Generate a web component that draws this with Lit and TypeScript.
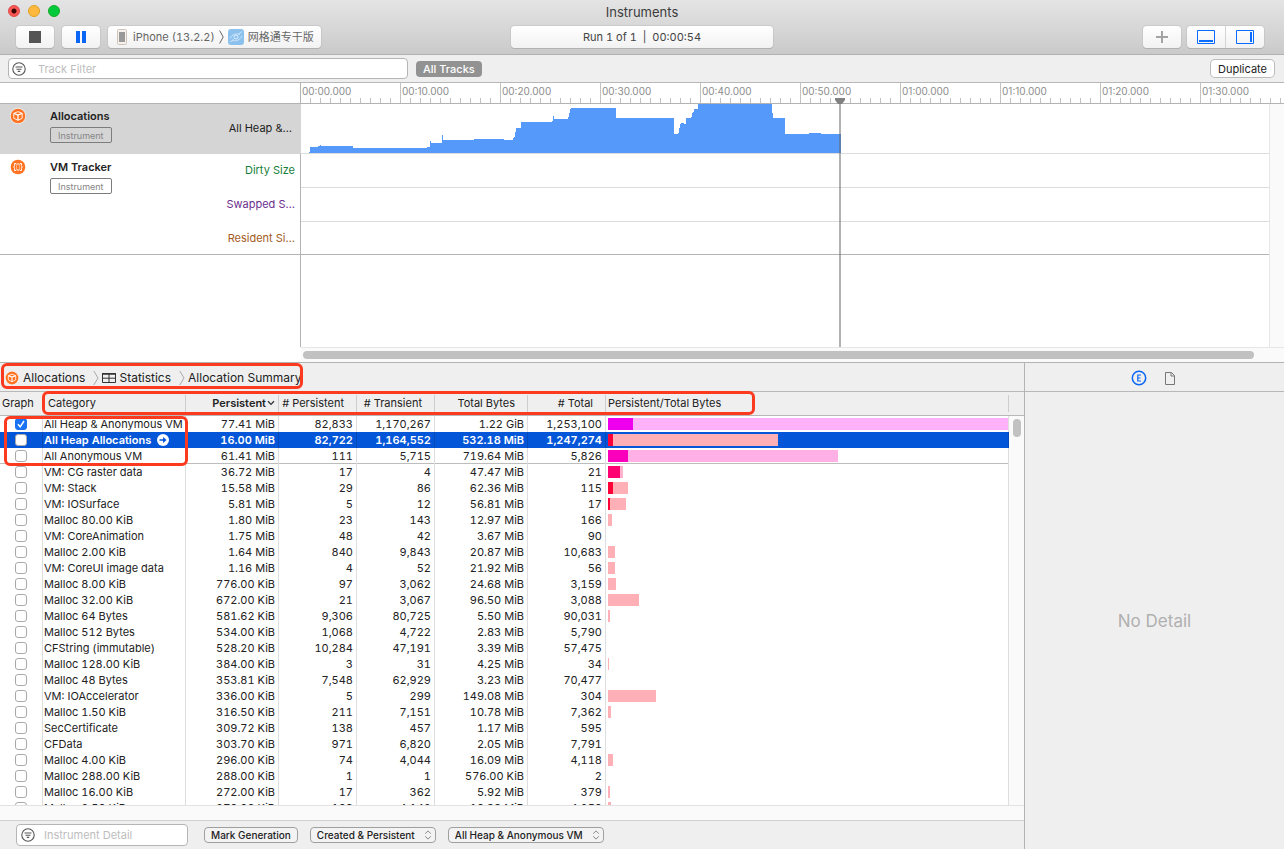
import { LitElement, html, css, svg, nothing } from "lit";
import { customElement, state } from "lit/decorators.js";
import { classMap } from "lit/directives/class-map.js";

interface Allocation {
  category: string;
  persistent: string;
  live: string;
  transient: string;
  totalBytes: string;
  total: string;
  tone?: string;
}

const row = (
  category: string,
  persistent: string,
  live: string,
  transient: string,
  totalBytes: string,
  total: string,
  tone = "",
): Allocation => ({ category, persistent, live, transient, totalBytes, total, tone });

const ROWS: Allocation[] = [
  row("All Heap & Anonymous VM", "77.41 MiB", "82,833", "1,170,267", "1.22 GiB", "1,253,100", "magenta"),
  row("All Heap Allocations", "16.00 MiB", "82,722", "1,164,552", "532.18 MiB", "1,247,274"),
  row("All Anonymous VM", "61.41 MiB", "111", "5,715", "719.64 MiB", "5,826", "pink"),
  row("VM: CG raster data", "36.72 MiB", "17", "4", "47.47 MiB", "21", "rose"),
  row("VM: Stack", "15.58 MiB", "29", "86", "62.36 MiB", "115"),
  row("VM: IOSurface", "5.81 MiB", "5", "12", "56.81 MiB", "17"),
  row("Malloc 80.00 KiB", "1.80 MiB", "23", "143", "12.97 MiB", "166"),
  row("VM: CoreAnimation", "1.75 MiB", "48", "42", "3.67 MiB", "90"),
  row("Malloc 2.00 KiB", "1.64 MiB", "840", "9,843", "20.87 MiB", "10,683"),
  row("VM: CoreUI image data", "1.16 MiB", "4", "52", "21.92 MiB", "56"),
  row("Malloc 8.00 KiB", "776.00 KiB", "97", "3,062", "24.68 MiB", "3,159"),
  row("Malloc 32.00 KiB", "672.00 KiB", "21", "3,067", "96.50 MiB", "3,088"),
  row("Malloc 64 Bytes", "581.62 KiB", "9,306", "80,725", "5.50 MiB", "90,031"),
  row("Malloc 512 Bytes", "534.00 KiB", "1,068", "4,722", "2.83 MiB", "5,790"),
  row("CFString (immutable)", "528.20 KiB", "10,284", "47,191", "3.39 MiB", "57,475"),
  row("Malloc 128.00 KiB", "384.00 KiB", "3", "31", "4.25 MiB", "34"),
  row("Malloc 48 Bytes", "353.81 KiB", "7,548", "62,929", "3.23 MiB", "70,477"),
  row("VM: IOAccelerator", "336.00 KiB", "5", "299", "149.08 MiB", "304"),
  row("Malloc 1.50 KiB", "316.50 KiB", "211", "7,151", "10.78 MiB", "7,362"),
  row("SecCertificate", "309.72 KiB", "138", "457", "1.17 MiB", "595"),
  row("CFData", "303.70 KiB", "971", "6,820", "2.05 MiB", "7,791"),
  row("Malloc 4.00 KiB", "296.00 KiB", "74", "4,044", "16.09 MiB", "4,118"),
  row("Malloc 288.00 KiB", "288.00 KiB", "1", "1", "576.00 KiB", "2"),
  row("Malloc 16.00 KiB", "272.00 KiB", "17", "362", "5.92 MiB", "379"),
  row("Malloc 2.50 KiB", "270.00 KiB", "108", "4,142", "10.38 MiB", "4,250"),
];

const UNITS: Record<string, number> = { KiB: 1 / 1024, MiB: 1, GiB: 1024 };
const SMALLEST_BAR = 4;

const mebibytes = (size: string): number => {
  const [amount, unit] = size.split(" ");
  return Number(amount) * UNITS[unit];
};

const LARGEST = Math.max(...ROWS.map((r) => mebibytes(r.totalBytes)));

const barWidth = (size: string): string => {
  const value = mebibytes(size);
  return value < SMALLEST_BAR ? "0" : `${((value / LARGEST) * 100).toFixed(2)}%`;
};

/* Heap level over time: [x, top] steps on a 100px-per-10s time axis. */
const LEVELS: [number, number][] = [
  [309, 48], [310, 43], [318, 42], [320, 41], [321, 42], [353, 44], [427, 43], [430, 37],
  [431, 39], [442, 31], [443, 36], [474, 35], [504, 36], [513, 34], [514, 33], [515, 28],
  [516, 24], [521, 18], [552, 17], [553, 12], [554, 15], [568, 13], [569, 9], [570, 5],
  [571, 4], [616, 14], [674, 30], [678, 29], [679, 24], [680, 20], [681, 19], [684, 20],
  [686, 14], [691, 13], [692, 9], [693, 8], [694, 5], [698, 0], [772, 9], [773, 14],
  [785, 30], [809, 29], [821, 30],
];
/* Each pair lowers or raises the outline at its x; the last level runs to the playhead. */
const levelPath = `M309 49${LEVELS.map(([x, y]) => `H${x}V${y}`).join("")}H841V49Z`;

const TIMES = [
  "00:00.000", "00:10.000", "00:20.000", "00:30.000", "00:40.000",
  "00:50.000", "01:00.000", "01:10.000", "01:20.000", "01:30.000",
];

const filterIcon = html`<svg class="filter-icon" width="14" height="14" viewBox="0 0 14 14" aria-hidden="true">
  <circle cx="7" cy="7" r="6.2" fill="none" stroke="#555" stroke-width="1.1" />
  <path d="M3.5 5h7M4.5 7.2h5M5.8 9.4h2.4" stroke="#555" stroke-width="1.1" />
</svg>`;

const cubeIcon = (size: number) => html`<svg width=${size} height=${size} viewBox="0 0 16 16" aria-hidden="true">
  <circle cx="8" cy="8" r="8" fill="#fff" opacity=".7" />
  <circle cx="8" cy="8" r="7.3" fill="#ff7322" />
  <path d="M8 3.700 12.200 5.300V10.300L8 12.300 3.800 10.300V5.300Z" fill="none" stroke="#fff" stroke-width=".9" stroke-linejoin="round" />
  <path d="M3.800 5.300 8 7 12.200 5.300M8 7V12.300" fill="none" stroke="#fff" stroke-width="1.300" />
</svg>`;

const vmIcon = html`<svg width="16" height="16" viewBox="0 0 16 16" aria-hidden="true">
  <circle cx="8" cy="8" r="7.3" fill="#ff7322" />
  <path d="M6 4.5H4.6V6.6L3.8 8 4.6 9.4V11.5H6M10 4.5h1.4V6.6L12.2 8 11.4 9.4V11.5H10" fill="none" stroke="#fff" stroke-width="1" />
  <path d="M6.6 5h2.8M6.6 11h2.8" stroke="#fff" stroke-width="1" />
  <path d="M6.6 5v6M9.4 5v6" stroke="#ffd0b0" stroke-width=".7" />
</svg>`;

const crumbArrow = html`<svg class="crumb-arrow" width="6" height="16" viewBox="0 0 6 16" aria-hidden="true">
  <path d="M.8 1 5 8 .8 15" fill="none" stroke="#a8a8a8" stroke-width="1" />
</svg>`;

const stepper = html`<svg class="stepper" width="8" height="10" viewBox="0 0 8 10" aria-hidden="true">
  <path d="M1.2 3.7 4 .9l2.8 2.8M1.2 6.3 4 9.1l2.8-2.8" fill="none" stroke="#888" stroke-width="1" />
</svg>`;

@customElement("app-root")
export class AppRoot extends LitElement {
  @state() private selected = 1;

  static styles = css`
    :host {
      display: flex;
      flex-direction: column;
      height: 100vh;
      overflow: hidden;
      background: #fff;
      color: #222;
      font: 11px/16px Inter, "Noto Sans CJK SC", sans-serif;
    }
    * {
      box-sizing: border-box;
    }
    svg {
      display: block;
      flex: none;
    }
    button,
    input,
    select {
      margin: 0;
      padding: 0;
      font: inherit;
      color: inherit;
    }
    .titlebar {
      flex: none;
      display: flex;
      flex-direction: column;
      height: 55px;
      border-bottom: 1px solid #b1b1b1;
      background: linear-gradient(#e4e4e4, #cacaca);
    }
    .caption {
      display: grid;
      grid-template-columns: 1fr auto 1fr;
      align-items: center;
      height: 24px;
      padding: 0 8px;
    }
    .lights {
      display: flex;
      gap: 8px;
      margin-bottom: 2px;
    }
    .light {
      width: 12px;
      height: 12px;
      border: 1px solid #de4643;
      border-radius: 50%;
      background: radial-gradient(circle, #3b0503 2px, #fc5753 3px);
    }
    .light.minimize {
      border-color: #dfa023;
      background: #fdb93e;
    }
    .light.zoom {
      border-color: #12ac28;
      background: #00c93b;
    }
    h1 {
      margin: 0;
      font-size: 13px;
      font-weight: 400;
      color: #3c3c3c;
    }
    .toolbar {
      display: grid;
      grid-template-columns: 1fr minmax(0, 262px) 1fr;
      align-items: center;
      height: 25px;
      padding: 0 16px;
    }
    .tools {
      display: flex;
      align-items: center;
      gap: 8px;
    }
    .tools.end {
      justify-content: flex-end;
      gap: 6px;
      padding-right: 4px;
    }
    .tool,
    .scheme,
    .status {
      display: flex;
      align-items: center;
      justify-content: center;
      height: 22px;
      border: 0;
      border-radius: 4px;
      background: linear-gradient(#fff, #f2f2f2);
      box-shadow: 0 0 0 1px #bdbdbd88, 0 1px 0 #a5a5a5;
    }
    .tool {
      width: 38px;
    }
    .scheme {
      padding: 0 7px 0 9px;
      color: #666;
      gap: 4px;
      white-space: nowrap;
      font-variant-numeric: tabular-nums;
    }
    .scheme svg:first-child {
      margin-right: 2px;
    }
    .status {
      color: #444;
      white-space: pre;
      font-variant-numeric: tabular-nums;
    }
    .segments {
      display: flex;
      border-radius: 4px;
      box-shadow: 0 0 0 1px #bdbdbd88, 0 1px 0 #a5a5a5;
    }
    .segments .tool {
      box-shadow: none;
    }
    .segments .tool:first-child {
      border-radius: 4px 0 0 4px;
      border-right: 1px solid #d4d4d4;
      width: 39px;
    }
    .segments .tool:last-child {
      border-radius: 0 4px 4px 0;
    }
    .filterbar {
      flex: none;
      display: flex;
      align-items: center;
      gap: 8px;
      height: 28px;
      padding: 0 10px 0 8px;
      border-bottom: 1px solid #b8b8b8;
      background: #efefef;
    }
    .field {
      display: flex;
      align-items: center;
      gap: 12px;
      height: 21px;
      padding-left: 3px;
      border: 1px solid #b5b5b5;
      border-radius: 4px;
      background: #fff;
    }
    .field.track {
      width: 400px;
    }
    .field input {
      flex: 1;
      min-width: 0;
      border: 0;
      outline: 0;
      background: none;
    }
    .field input::placeholder {
      color: #bdbdbd;
      opacity: 1;
    }
    .pill {
      height: 16px;
      padding: 0 7px;
      border: 0;
      border-radius: 4px;
      background: #929292;
      color: #fff;
      font-weight: 500;
    }
    .duplicate {
      height: 17px;
      margin-left: auto;
      padding: 0 7px;
      border: 0;
      border-radius: 4px;
      background: #fff;
      box-shadow: 0 0 0 1px #bcbcbc;
    }
    .panes {
      flex: 1;
      min-height: 0;
      display: grid;
      grid-template-rows: minmax(0, 280fr) minmax(0, 486fr);
    }
    .timeline {
      position: relative;
      display: grid;
      grid-template-columns: 301px minmax(0, 1fr);
      grid-template-rows: 21px minmax(0, 1fr) 15px;
      border-bottom: 1px solid #b3b3b3;
    }
    .corner,
    .ruler {
      border-bottom: 1px solid #b3b3b3;
    }
    .corner {
      border-right: 1px solid #b3b3b3;
    }
    .ruler {
      display: flex;
      overflow: hidden;
      background: repeating-linear-gradient(90deg, transparent 0 9px, #c2c2c2 9px 10px) bottom / 100% 5px no-repeat;
      color: #8c8c8c;
      font-size: 10px;
      line-height: 17px;
    }
    .time {
      flex: none;
      width: 100px;
      padding-left: 1px;
      border-right: 1px solid #c2c2c2;
    }
    .tracks {
      grid-column: 1 / -1;
      display: grid;
      grid-template-columns: minmax(0, 1fr) 15px;
    }
    .gutter {
      border-left: 1px solid #e6e6e6;
      background: #fafafa;
    }
    .track-list {
      display: flex;
      flex-direction: column;
    }
    .row {
      display: grid;
      grid-template-columns: 301px minmax(0, 1fr);
    }
    .row.rest {
      flex: 1;
    }
    .head {
      display: flex;
      gap: 24px;
      padding: 4px 5px 0 10px;
      border-right: 1px solid #b3b3b3;
    }
    .row.active .head {
      background: #d5d5d5;
      border-color: #d5d5d5;
    }
    .row.vm {
      border-bottom: 1px solid #b3b3b3;
    }
    .row.vm .head {
      padding-top: 5px;
    }
    .name {
      display: flex;
      flex-direction: column;
      align-items: flex-start;
      gap: 3px;
    }
    .name strong {
      font-weight: 600;
    }
    .tag {
      height: 16px;
      padding: 0 7px;
      border: 1px solid #7d7d7d;
      border-radius: 2px;
      color: #858585;
      font-size: 9px;
      line-height: 15px;
    }
    .series {
      display: flex;
      flex-direction: column;
      margin: -6px 0 0 auto;
      text-align: right;
      line-height: 34px;
    }
    .series span {
      height: 34px;
    }
    .series span:last-child {
      height: 33px;
    }
    .row.active .series {
      margin-top: -4px;
      padding-right: 3px;
      line-height: 49px;
    }
    .row.active .series span {
      height: 50px;
    }
    .green {
      color: #17803a;
    }
    .purple {
      color: #6b2f8f;
    }
    .brown {
      color: #a35b24;
    }
    .lane {
      border-bottom: 1px solid #dcdcdc;
      overflow: hidden;
    }
    .lanes {
      display: grid;
      grid-template-rows: 34px 34px 32px;
    }
    .lanes .lane:last-child {
      border: 0;
    }
    .playhead {
      position: absolute;
      left: 835px;
      top: 15px;
      bottom: 15px;
      width: 10px;
      display: flex;
      flex-direction: column;
      align-items: center;
    }
    .playhead::after {
      content: "";
      flex: 1;
      width: 2px;
      background: #66666680;
    }
    .hscroll {
      grid-column: 2;
      padding: 3px 30px 3px 2px;
      border-top: 1px solid #e6e6e6;
      background: #fafafa;
    }
    .thumb {
      height: 8px;
      border-radius: 4px;
      background: #c1c1c1;
    }
    .lower {
      display: grid;
      grid-template-columns: minmax(0, 1024px) minmax(259px, 1fr);
      background: #efefef;
    }
    .detail {
      position: relative;
      display: flex;
      flex-direction: column;
      min-height: 0;
    }
    .crumbs {
      flex: none;
      display: flex;
      align-items: center;
      height: 29px;
      padding: 2px 0 0 5px;
      border-bottom: 1px solid #b8b8b8;
      font-size: 12px;
    }
    .crumbs a {
      display: flex;
      align-items: center;
      gap: 3px;
      color: inherit;
      text-decoration: none;
      white-space: nowrap;
    }
    .crumbs a:first-child {
      gap: 4px;
    }
    .crumb-arrow {
      margin: 0 3px 0 8px;
    }
    .grid {
      flex: 1;
      min-height: 0;
      display: grid;
      grid-template-columns: minmax(0, 1fr) 15px;
      overflow: hidden;
    }
    .viewport {
      overflow: hidden;
      background: linear-gradient(#fff, #fff) 0 24px no-repeat;
    }
    table {
      width: 100%;
      table-layout: fixed;
      border-spacing: 0;
      font-variant-numeric: tabular-nums;
    }
    .w-graph {
      width: 43px;
    }
    .w-category {
      width: 143px;
    }
    .w-size {
      width: 93px;
    }
    .w-count {
      width: 78px;
    }
    th {
      height: 24px;
      padding: 0 13px 1px 0;
      border-bottom: 1px solid #b8b8b8;
      background: linear-gradient(#cdcdcd, #cdcdcd) right 3px / 1px 17px no-repeat;
      font-weight: 400;
      text-align: right;
      white-space: nowrap;
    }
    th:first-child {
      padding-left: 2px;
      background: none;
      text-align: left;
    }
    th.category {
      padding-left: 5px;
      text-align: left;
    }
    th.sorted {
      padding-right: 4px;
      font-weight: 600;
    }
    .sort {
      display: flex;
      align-items: center;
      justify-content: flex-end;
      gap: 1px;
    }
    th.bars {
      padding-left: 2px;
      text-align: left;
    }
    td {
      height: 16px;
      padding: 0 3px 0 0;
      border-right: 1px solid #dedede;
      text-align: right;
      white-space: nowrap;
      overflow: hidden;
    }
    td:first-child {
      padding: 2px 0 2px 15px;
    }
    td.category {
      padding: 0 0 0 1px;
      text-align: left;
    }
    td.bars {
      padding: 0 0 0 2px;
    }
    tr.divide td {
      background: linear-gradient(#bdbdbd, #bdbdbd) 0 100% / 100% 1px no-repeat border-box;
    }
    tr.selected td {
      background: #0456d8;
      border-color: #0349b8;
      color: #fff;
      font-weight: 600;
    }
    .label {
      display: flex;
      align-items: center;
      gap: 6px;
    }
    .check {
      display: block;
      appearance: none;
      width: 12px;
      height: 12px;
      border: 1px solid #ababab;
      border-radius: 3px;
      background: #fff;
    }
    .check:checked {
      border-color: #1a6ff0;
      background: #1a73f5
        url("data:image/svg+xml,%3Csvg xmlns='http://www.w3.org/2000/svg' viewBox='0 0 10 10'%3E%3Cpath d='M2 5.2 4.2 7.8 8 2' fill='none' stroke='white' stroke-width='1.5'/%3E%3C/svg%3E")
        center / 10px 10px;
    }
    .bar {
      height: 12px;
      background: #ffb0b6;
    }
    .bar-live {
      height: 12px;
      margin-top: -12px;
      background: #ff0038;
    }
    .magenta .bar {
      background: #fcb1fa;
    }
    .magenta .bar-live {
      background: #ee00ee;
    }
    .pink .bar {
      background: #ffb1e6;
    }
    .pink .bar-live {
      background: #fa00bd;
    }
    .rose .bar {
      background: #ffb1cd;
    }
    .rose .bar-live {
      background: #ff0070;
    }
    .vscroll {
      margin-top: 23px;
      padding: 3px 3px 0 4px;
      border-top: 1px solid #b8b8b8;
      background: #fafafa;
    }
    .vthumb {
      width: 8px;
      height: 18px;
      border-radius: 4px;
      background: #c1c1c1;
    }
    .strip {
      flex: none;
      height: 15px;
      border-top: 1px solid #e2e2e2;
      background: #fafafa;
    }
    .footer {
      flex: none;
      display: flex;
      align-items: center;
      gap: 12px;
      height: 29px;
      padding-left: 16px;
      border-top: 1px solid #cfcfcf;
      font-size: 10px;
    }
    .footer .field {
      width: 172px;
      height: 22px;
      margin-right: 4px;
      padding-left: 4px;
      gap: 9px;
      font-size: 11px;
    }
    .small {
      height: 16px;
      padding: 0 6px;
      border: 1px solid #9f9f9f;
      border-radius: 4px;
      background: #f3f3f3;
      line-height: 14px;
      font-weight: 500;
    }
    .choice {
      display: grid;
      align-items: center;
    }
    .choice > * {
      grid-area: 1 / 1;
    }
    .choice select {
      appearance: none;
      padding-right: 20px;
    }
    .stepper {
      justify-self: end;
      margin-right: 4px;
      pointer-events: none;
    }
    .inspector {
      display: flex;
      flex-direction: column;
      border-left: 1px solid #b3b3b3;
    }
    .tabs {
      flex: none;
      display: flex;
      align-items: center;
      justify-content: center;
      gap: 18px;
      height: 29px;
      padding: 2px 4px 0 0;
      border-bottom: 1px solid #b8b8b8;
    }
    .tabs button {
      border: 0;
      background: none;
    }
    .empty {
      flex: 1;
      display: flex;
      align-items: center;
      justify-content: center;
      margin: 0;
      color: #b0b0b0;
      font-size: 17px;
    }
    .callout {
      position: absolute;
      border: 3px solid #fb3a1f;
      border-radius: 6px;
      pointer-events: none;
    }
    .callout.path {
      left: 1px;
      top: 0;
      width: 302px;
      height: 26px;
    }
    .callout.columns {
      left: 42px;
      top: 28px;
      width: 713px;
      height: 24px;
    }
    .callout.groups {
      left: 4px;
      top: 53px;
      width: 184px;
      height: 50px;
    }
  `;

  private renderTitlebar() {
    return html`<header class="titlebar">
      <div class="caption">
        <div class="lights">
          <button class="light" aria-label="Close"></button>
          <button class="light minimize" aria-label="Minimize"></button>
          <button class="light zoom" aria-label="Zoom"></button>
        </div>
        <h1>Instruments</h1>
      </div>
      <div class="toolbar">
        <div class="tools">
          <button class="tool" aria-label="Stop">
            <svg width="12" height="12"><path d="M0 0h12v12H0z" fill="#555" /></svg>
          </button>
          <button class="tool" aria-label="Pause">
            <svg width="10" height="12"><path d="M0 0h4v12H0zM6 0h4v12H6z" fill="#0a66f5" /></svg>
          </button>
          <button class="scheme">
            <svg width="10" height="16" viewBox="0 0 10 16">
              <rect x=".5" y=".5" width="9" height="15" rx="1.2" fill="#f6f1ec" stroke="#cfc4ba" />
              <path d="M2 3h6v10H2z" fill="#999" />
            </svg>
            iPhone (13.2.2)
            <svg width="5" height="14" viewBox="0 0 5 14"><path d="M.6.5 4.2 7 .6 13.5" fill="none" stroke="#666" /></svg>
            <svg width="16" height="16" viewBox="0 0 16 16">
              <rect width="16" height="16" rx="3" fill="#8cc1ee" />
              <path d="M2 9.500C4 5.500 8 4 12 5.500M4 11C8 13 12 11 14 7M2 13 5.500 10.500M10.500 5 14 2.500" fill="none" stroke="#cfe6fa" stroke-width=".9" />
              <circle cx="8" cy="8" r="2" fill="none" stroke="#e4f1fc" stroke-width=".9" />
            </svg>
            网格通专干版
          </button>
        </div>
        <div class="status">Run 1 of 1  |  00:00:54</div>
        <div class="tools end">
          <button class="tool" aria-label="Add instrument">
            <svg width="12" height="12"><path d="M5 0h2v5h5v2H7v5H5V7H0V5h5z" fill="#a3a3a3" /></svg>
          </button>
          <div class="segments">
            <button class="tool" aria-label="Toggle detail area">
              <svg width="18" height="14"><path d="M.5.5h17v13H.5z" fill="none" stroke="#0a6cff" /><path d="M2 10h14v2H2z" fill="#0a6cff" /></svg>
            </button>
            <button class="tool" aria-label="Toggle inspector">
              <svg width="18" height="14"><path d="M.5.5h17v13H.5z" fill="none" stroke="#0a6cff" /><path d="M14 2h2v10h-2z" fill="#0a6cff" /></svg>
            </button>
          </div>
        </div>
      </div>
    </header>`;
  }

  private renderTimeline() {
    return html`<section class="timeline" aria-label="Timeline">
      <div class="corner"></div>
      <div class="ruler">${TIMES.map((t) => html`<div class="time">${t}</div>`)}</div>
      <div class="tracks">
        <div class="track-list">
          <div class="row active">
            <div class="head">
              ${cubeIcon(16)}
              <div class="name"><strong>Allocations</strong><span class="tag">Instrument</span></div>
              <div class="series"><span>All Heap &amp;…</span></div>
            </div>
            <div class="lane">
              <svg width="540" height="49" viewBox="301 0 540 49">
                ${svg`<path d=${levelPath} fill="#5599fb" shape-rendering="crispEdges" />`}
              </svg>
            </div>
          </div>
          <div class="row vm">
            <div class="head">
              ${vmIcon}
              <div class="name"><strong>VM Tracker</strong><span class="tag">Instrument</span></div>
              <div class="series">
                <span class="green">Dirty Size</span>
                <span class="purple">Swapped S…</span>
                <span class="brown">Resident Si…</span>
              </div>
            </div>
            <div class="lanes"><div class="lane"></div><div class="lane"></div><div class="lane"></div></div>
          </div>
          <div class="row rest"><div class="head"></div></div>
        </div>
        <div class="gutter"></div>
      </div>
      <div class="hscroll"><div class="thumb"></div></div>
      <div class="playhead">
        <svg width="10" height="6"><path d="M0 0h10v2L7 6H3L0 2z" fill="#808080" /></svg>
      </div>
    </section>`;
  }

  private renderRow(r: Allocation, i: number) {
    const selected = i === this.selected;
    return html`<tr
      class=${classMap({ selected, divide: i === 2, [r.tone || "red"]: true })}
      @click=${() => (this.selected = i)}
    >
      <td><input class="check" type="checkbox" aria-label=${`Graph ${r.category}`} .checked=${i === 0} /></td>
      <td class="category">
        <div class="label">
          ${r.category}
          ${selected
            ? html`<svg width="12" height="12" viewBox="0 0 12 12">
                <circle cx="6" cy="6" r="6" fill="#fff" />
                <path d="M2.500 5.200H6V3l3.600 3L6 9V6.800H2.500z" fill="#0456d8" />
              </svg>`
            : nothing}
        </div>
      </td>
      <td>${r.persistent}</td>
      <td>${r.live}</td>
      <td>${r.transient}</td>
      <td>${r.totalBytes}</td>
      <td>${r.total}</td>
      <td class="bars">
        <div class="bar" style="width:${barWidth(r.totalBytes)}"></div>
        <div class="bar-live" style="width:${barWidth(r.persistent)}"></div>
      </td>
    </tr>`;
  }

  private renderDetail() {
    return html`<section class="detail" aria-label="Detail">
      <nav class="crumbs" aria-label="Detail path">
        <a href="#allocations">${cubeIcon(14)}Allocations</a>
        ${crumbArrow}
        <a href="#statistics">
          <svg width="14" height="10" viewBox="0 0 14 10">
            <path d="M.5 1h13v8.500H.5zM.5 5.200h13M7 1v8.500" fill="none" stroke="#333" />
            <path d="M0 0h14v1.500H0z" fill="#333" />
          </svg>
          Statistics
        </a>
        ${crumbArrow}
        <a href="#summary">Allocation Summary</a>
      </nav>
      <div class="grid">
        <div class="viewport">
          <table>
            <colgroup>
              <col class="w-graph" /><col class="w-category" /><col class="w-size" /><col class="w-count" />
              <col class="w-count" /><col class="w-size" /><col class="w-count" /><col />
            </colgroup>
            <thead>
              <tr>
                <th scope="col">Graph</th>
                <th scope="col" class="category">Category</th>
                <th scope="col" class="sorted" aria-sort="descending">
                  <span class="sort">Persistent
                    <svg width="8" height="6" viewBox="0 0 8 6"><path d="M1 1.200 4 4.400l3-3.200" fill="none" stroke="#333" stroke-width="1.300" /></svg>
                  </span>
                </th>
                <th scope="col"># Persistent</th>
                <th scope="col"># Transient</th>
                <th scope="col">Total Bytes</th>
                <th scope="col"># Total</th>
                <th scope="col" class="bars">Persistent/Total Bytes</th>
              </tr>
            </thead>
            <tbody>${ROWS.map((r, i) => this.renderRow(r, i))}</tbody>
          </table>
        </div>
        <div class="vscroll"><div class="vthumb"></div></div>
      </div>
      <div class="strip"></div>
      <footer class="footer">
        <label class="field">${filterIcon}<input type="text" placeholder="Instrument Detail" aria-label="Instrument Detail" /></label>
        <button class="small">Mark Generation</button>
        <label class="choice">
          <select class="small" aria-label="Lifespan"><option>Created &amp; Persistent</option></select>${stepper}
        </label>
        <label class="choice">
          <select class="small" aria-label="Allocation type"><option>All Heap &amp; Anonymous VM</option></select>${stepper}
        </label>
      </footer>
      <div class="callout path"></div>
      <div class="callout columns"></div>
      <div class="callout groups"></div>
    </section>`;
  }

  private renderInspector() {
    return html`<aside class="inspector" aria-label="Inspector">
      <div class="tabs">
        <button aria-label="Extended detail">
          <svg width="16" height="16" viewBox="0 0 16 16">
            <circle cx="8" cy="8" r="6.700" fill="none" stroke="#0a66f5" stroke-width="1.500" />
            <path d="M10 5H6.800v6H10M6.800 8h2.700" fill="none" stroke="#0a66f5" stroke-width="1.200" />
          </svg>
        </button>
        <button aria-label="File">
          <svg width="10" height="13" viewBox="0 0 10 13">
            <path d="M.5.5H6.500L9.500 3.500V12.500H.5ZM6 .5V4H9.500" fill="none" stroke="#777" />
          </svg>
        </button>
      </div>
      <p class="empty">No Detail</p>
    </aside>`;
  }

  render() {
    return html`
      ${this.renderTitlebar()}
      <div class="filterbar">
        <label class="field track">${filterIcon}<input type="text" placeholder="Track Filter" aria-label="Track Filter" /></label>
        <button class="pill">All Tracks</button>
        <button class="duplicate">Duplicate</button>
      </div>
      <main class="panes">
        ${this.renderTimeline()}
        <div class="lower">${this.renderDetail()}${this.renderInspector()}</div>
      </main>
    `;
  }
}
